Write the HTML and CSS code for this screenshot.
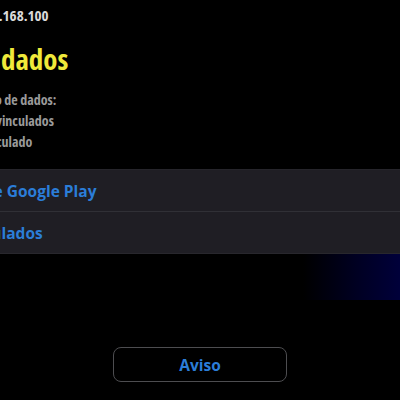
FILE: index.html
```html
<!DOCTYPE html>
<html lang="pt-BR">
<head>
<meta charset="utf-8">
<title>Vínculo de dados</title>
<link rel="stylesheet" href="styles.css">
</head>
<body>
<main class="screen">
  <section class="content">
    <p class="version">Versão do cliente: 12.168.100</p>
    <h1 class="title">Vínculo de dados</h1>
    <ul class="status">
      <li>Estado do último envio de dados:</li>
      <li>Serviços Google Play: vinculados</li>
      <li>Conta KONAMI ID: vinculado</li>
    </ul>
    <nav class="menu">
      <a class="menu-row" href="#">Copiar dados de Google Play</a>
      <a class="menu-row" href="#">Ver dados vinculados</a>
    </nav>
  </section>
  <div class="glow"></div>
  <button class="notice" type="button">Aviso</button>
</main>
</body>
</html>
```
FILE: styles.css
```css
html, body {
  margin: 0;
  background: #000;
}

.screen {
  width: 400px;
  height: 400px;
  overflow: hidden;
  display: flex;
  flex-direction: column;
  font-family: "Open Sans", sans-serif;
  font-stretch: 80%;
  font-weight: 700;
}

/* the dialog column is wider than the view and starts left of it */
.content {
  margin-left: -121px;
  white-space: nowrap;
}

.version {
  margin: 5px 0 0;
  font-size: 15px;
  line-height: 20px;
  color: #d9d9d9;
}

.title {
  margin: 17px 0 0;
  font-size: 29px;
  line-height: 34px;
  color: #efe93a;
}

.status {
  list-style: none;
  margin: 13px 0 0;
  padding: 0;
  font-size: 14px;
  line-height: 21px;
  color: #9a9a9a;
}

.menu {
  margin-top: 17px;
  background: #1f1e24;
  border-top: 1px solid #26252b;
  border-bottom: 1px solid #28272d;
  display: flex;
  flex-direction: column;
}

.menu-row {
  height: 41px;
  display: flex;
  align-items: center;
  font-size: 15.5px;
  font-stretch: 100%;
  color: #2b7dd8;
  text-decoration: none;
}

.menu-row + .menu-row {
  border-top: 1px solid #303036;
}

.glow {
  align-self: flex-end;
  width: 97px;
  height: 46px;
  background: linear-gradient(90deg, #000 0%, #00000f 25%, #000022 55%, #00003a 100%);
}

.notice {
  align-self: center;
  margin-top: 47px;
  width: 174px;
  height: 35px;
  border: 1.5px solid #4d4d50;
  border-radius: 8px;
  background: #000;
  color: #2b7dd8;
  font: inherit;
  font-size: 15.5px;
  font-stretch: 100%;
}
```
